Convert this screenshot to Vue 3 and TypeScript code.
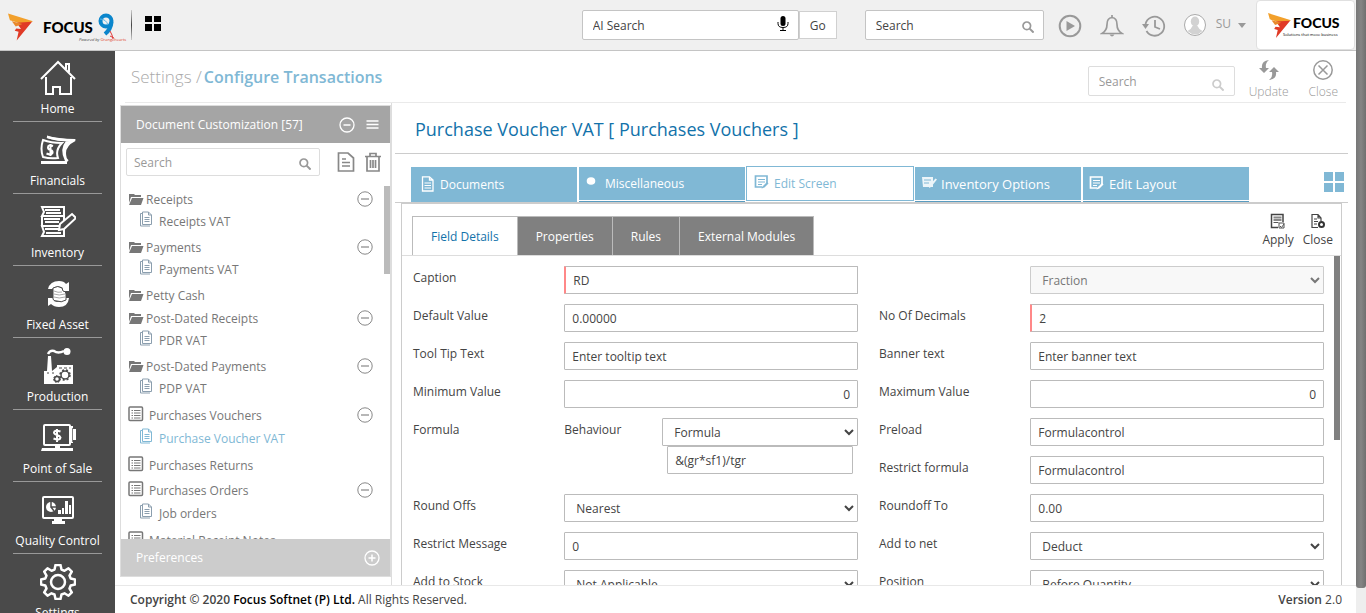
<script setup lang="ts">
import { ref } from 'vue'

interface NavItem { label: string; icon: string }
interface Group { label: string; kind: 'folder' | 'list'; children: string[] }
interface Tab { label: string; icon: string; look: string }
interface Field {
  label: string
  type: 'text' | 'select' | 'formula'
  value?: string
  placeholder?: string
  required?: boolean
  numeric?: boolean
  disabled?: boolean
}

const nav: NavItem[] = [
  { label: 'Home', icon: 'home' },
  { label: 'Financials', icon: 'money' },
  { label: 'Inventory', icon: 'inventory' },
  { label: 'Fixed Asset', icon: 'asset' },
  { label: 'Production', icon: 'factory' },
  { label: 'Point of Sale', icon: 'pos' },
  { label: 'Quality Control', icon: 'quality' },
  { label: 'Settings', icon: 'gear' },
]

const groups: Group[] = [
  { label: 'Receipts', kind: 'folder', children: ['Receipts VAT'] },
  { label: 'Payments', kind: 'folder', children: ['Payments VAT'] },
  { label: 'Petty Cash', kind: 'folder', children: [] },
  { label: 'Post-Dated Receipts', kind: 'folder', children: ['PDR VAT'] },
  { label: 'Post-Dated Payments', kind: 'folder', children: ['PDP VAT'] },
  { label: 'Purchases Vouchers', kind: 'list', children: ['Purchase Voucher VAT'] },
  { label: 'Purchases Returns', kind: 'list', children: [] },
  { label: 'Purchases Orders', kind: 'list', children: ['Job orders'] },
  { label: 'Material Receipt Notes', kind: 'list', children: [] },
]
const current = ref('Purchase Voucher VAT')

const tabs: Tab[] = [
  { label: 'Documents', icon: 'file', look: 'tall' },
  { label: 'Miscellaneous', icon: 'dot', look: 'lined' },
  { label: 'Edit Screen', icon: 'edit', look: 'active' },
  { label: 'Inventory Options', icon: 'options', look: 'lined large' },
  { label: 'Edit Layout', icon: 'edit', look: 'lined large' },
]
const subtabs = ['Field Details', 'Properties', 'Rules', 'External Modules']
const subtab = ref('Field Details')

const columns: Field[][] = [
  [
    { label: 'Caption', type: 'text', value: 'RD', required: true },
    { label: 'Default Value', type: 'text', value: '0.00000' },
    { label: 'Tool Tip Text', type: 'text', placeholder: 'Enter tooltip text' },
    { label: 'Minimum Value', type: 'text', value: '0', numeric: true },
    { label: 'Formula', type: 'formula', value: '&(gr*sf1)/tgr' },
    { label: 'Round Offs', type: 'select', value: 'Nearest' },
    { label: 'Restrict Message', type: 'text', value: '0' },
    { label: 'Add to Stock', type: 'select', value: 'Not Applicable' },
  ],
  [
    { label: '', type: 'select', value: 'Fraction', disabled: true },
    { label: 'No Of Decimals', type: 'text', value: '2', required: true },
    { label: 'Banner text', type: 'text', placeholder: 'Enter banner text' },
    { label: 'Maximum Value', type: 'text', value: '0', numeric: true },
    { label: 'Preload', type: 'text', value: 'Formulacontrol' },
    { label: 'Restrict formula', type: 'text', value: 'Formulacontrol' },
    { label: 'Roundoff To', type: 'text', value: '0.00' },
    { label: 'Add to net', type: 'select', value: 'Deduct' },
    { label: 'Position', type: 'select', value: 'Before Quantity' },
  ],
]
</script>

<template>
  <svg class="sprite" aria-hidden="true">
    <symbol id="home" viewBox="0 0 36 36">
      <path d="M1 19 18 2l17 17M6 17v17h7v-7h7v7h11V17M26 9V4h3v8" fill="none" stroke="#fff" stroke-width="2" />
    </symbol>
    <symbol id="money" viewBox="0 0 36 36">
      <path d="M7 5q8 3 28 3-10 5-10 13 0 6 3 8" fill="none" stroke="#fff" stroke-width="2" />
      <path d="M1 29h26v3H1zM7 3.500q10 3 29 4l-3 2Q18 10 7 6zM26 9l8-1q-9 4-9 13 0 5 3 8h-3q-6-12 1-20z" fill="#fff" />
      <path d="M3 8q8 3 19 3-7 7-4 15-8 1-15-1-3-8 0-17z" fill="none" stroke="#fff" stroke-width="2" />
      <path d="M13 14q-5-2-5 1.500 0 2 2.500 2.500t2 3Q11 23.500 6.500 21.500M10.500 12v12" fill="none" stroke="#fff" stroke-width="2" />
    </symbol>
    <symbol id="inventory" viewBox="0 0 36 36">
      <path d="M2 3h22v9H2l2-4zM24 12v10H2V12M2 22h22v10H2l2-4z" fill="none" stroke="#fff" stroke-width="2" />
      <path d="M5 6h15M6 9h15M4 15h16M5 18h14M5 25h15M6 29h15" stroke="#fff" stroke-width="2" />
      <path d="m19 26 1-6L32 10l4 4-12 11z" fill="#4a4a4a" stroke="#fff" stroke-width="2" />
    </symbol>
    <symbol id="asset" viewBox="0 0 36 36">
      <path d="M8 13Q10 5 19 5q5 0 7 3l3-2v9h-9l3-3q-6-4-11 1zM29 22q-1 9-10 9-5 0-8-3l-3 2v-8h9l-3 3q7 3 12-3z" fill="#fff" />
      <path d="M13 12q5-3 9 0l1 3q3 0 3 3v6q-5 3-9 1-4 0-4-2z" fill="#fff" stroke="#4a4a4a" />
      <path d="M14 15q4 2 8 1M14 18q5 2 11 0M14 21q5 2 11 0" stroke="#aaa" fill="none" />
    </symbol>
    <symbol id="factory" viewBox="0 0 36 36">
      <path d="M4 36V23h3L8 8h3l1 15 5-4v-2h16v19zM20 19h3M25 19h3" fill="#fff" />
      <path d="M8 6q2-4 6-3 4 3 10 0" fill="none" stroke="#fff" stroke-width="2.500" />
      <circle cx="27" cy="3.500" r="3.500" fill="#fff" />
      <path d="M19 20h3M24 20h3M29 20h2M7 25h2M12 25h2" stroke="#4a4a4a" />
      <circle cx="25" cy="27" r="4" fill="none" stroke="#4a4a4a" stroke-width="1.500" />
      <circle cx="25" cy="27" r="5" fill="none" stroke="#4a4a4a" stroke-width="1.500" stroke-dasharray="2 2" />
      <circle cx="17" cy="31" r="2.500" fill="none" stroke="#4a4a4a" stroke-width="1.500" />
      <circle cx="17" cy="31" r="3.500" fill="none" stroke="#4a4a4a" stroke-dasharray="1.500 1.500" />
    </symbol>
    <symbol id="pos" viewBox="0 0 36 36">
      <rect x="4" y="5" width="26" height="20" rx="1" fill="none" stroke="#fff" stroke-width="2" />
      <path d="M29 6h4v3h3v11h-3v3h-4zM15 25h5v3h-5zM2 28h31v3H1z" fill="#fff" />
      <path d="M32.500 8v14" stroke="#4a4a4a" stroke-width=".7" />
      <path d="M20.500 11.500q-6-2-6.500 1 0 1.500 3 2.500t3.500 2.500Q20 21 13.500 18.500M17 9v13" fill="none" stroke="#fff" stroke-width="2" />
    </symbol>
    <symbol id="quality" viewBox="0 0 36 36">
      <rect x="3" y="5" width="30" height="21" rx="1" fill="none" stroke="#fff" stroke-width="2" />
      <path d="M14 26h8v3h3v3H12v-3h2zM18 18h3v4h-3zM22 16h2v6h-2zM25 9h3v13h-3zM29 13h2v9h-2z" fill="#fff" />
      <circle cx="11" cy="15" r="5" fill="#fff" />
      <path d="M11 10v5h5M11 15l3 4" fill="none" stroke="#4a4a4a" stroke-width="1.500" />
    </symbol>
    <symbol id="gear" viewBox="0 0 36 36">
      <path d="M14.500 5.500 15.500 1h5l1 4.500 3 1.300 4-2.500 3.300 3.300-2.300 4 1.200 2.900 4.300 1v5l-4.300 1-1.200 3 2.300 3.900-3.300 3.300-4-2.400-3 1.200-1 4.500h-5l-1-4.500-3-1.200-4 2.400-3.300-3.300L6.500 24.500l-1.200-3-4.300-1v-5l4.300-1 1.200-2.900-2.300-4 3.300-3.300 4 2.500z" fill="none" stroke="#fff" stroke-width="2.500" stroke-linejoin="round" />
      <circle cx="18" cy="18" r="7" fill="none" stroke="#fff" stroke-width="2.500" />
    </symbol>
    <symbol id="search" viewBox="0 0 12 12">
      <circle cx="4.800" cy="4.800" r="3.800" fill="none" stroke="currentColor" stroke-width="1.700" />
      <path d="m7.600 7.600 4 4" stroke="currentColor" stroke-width="2" />
    </symbol>
    <symbol id="minus" viewBox="0 0 16 16">
      <circle cx="8" cy="8" r="7.200" fill="none" stroke="currentColor" />
      <path d="M4 8h8" stroke="currentColor" stroke-width="1.200" />
    </symbol>
    <symbol id="folder" viewBox="0 0 16 12">
      <path d="M1 1h5l1 1h6v2H3L1 10zM4 5h11.500L13 12H1z" fill="currentColor" />
    </symbol>
    <symbol id="list" viewBox="0 0 16 16">
      <rect x="1" y="1" width="13.500" height="13.500" rx="1" fill="none" stroke="#777" stroke-width="1.500" />
      <path d="M3.500 4.500h1.500M3.500 7h1.500M3.500 9.500h1.500M3.500 12h1.500M6 4.500h6.500M6 7h6.500M6 9.500h6.500M6 12h6.500" stroke="#777" />
    </symbol>
    <symbol id="pages" viewBox="0 0 14 16">
      <path d="M3.500 1h6l3 3v9.500h-9zM9.500 1v3h3M3 2.500H1.500V15H11" fill="none" stroke="currentColor" />
      <path d="M5.500 6.500h5M5.500 8.500h5M5.500 10.500h5" stroke="currentColor" />
    </symbol>
    <symbol id="file" viewBox="0 0 16 16">
      <path d="M2.500.800h7L13 4v11H2.500zM9.500.800V4H13" fill="none" stroke="currentColor" stroke-width="1.300" />
      <path d="M4.500 7h6.500M4.500 9.500h6.500M4.500 12h6.500" stroke="currentColor" />
    </symbol>
    <symbol id="dot" viewBox="0 0 16 16"><ellipse cx="6" cy="6" rx="4.300" ry="3.800" fill="currentColor" /></symbol>
    <symbol id="edit" viewBox="0 0 16 16">
      <path d="M13 9V2H1.500v11H8" fill="none" stroke="currentColor" stroke-width="1.700" />
      <path d="M4 5.500h7M4 8h7M4 10.500h4" stroke="currentColor" stroke-width="1.200" />
      <path d="m8 13 5-5 1.500 1.500-4 4-3 1z" fill="currentColor" />
    </symbol>
    <symbol id="options" viewBox="0 0 16 16">
      <path d="M1 2h11v10H2zM14.500 3.500l1.500 1L10 12l-2 1 .500-3z" fill="currentColor" opacity=".85" />
      <path d="M3 5h7M3 8h5" stroke="#80b8d5" />
    </symbol>
    <symbol id="mark" viewBox="0 0 26 28">
      <path d="M0 0 26 8 18 12 2 7z" fill="#f2a02b" />
      <path d="M9 9.500 25 8.500 9 28l2-9-4-1 1.500-2.500 5 .500z" fill="#e03a26" />
      <path d="M4 8 15 11 8 13.500z" fill="#e9892b" />
    </symbol>
  </svg>

  <div class="page">
    <div class="app">
      <header class="top">
        <a href="#" class="brand" aria-label="Focus 9">
          <svg class="brand-mark"><use href="#mark" /></svg>
          <span class="brand-word">FOCUS</span>
          <svg class="nine" viewBox="0 0 18 28">
            <circle cx="9" cy="8" r="5.500" fill="none" stroke="#0b86cc" stroke-width="4" />
            <path d="M14.500 9Q14 16 8 21" fill="none" stroke="#0b86cc" stroke-width="4" />
            <path d="M3 6q6 0 8 6" fill="none" stroke="#5bb6e6" />
            <path d="m13 18 2 4 1 4M13 23l4 2" stroke="#e03a3a" fill="none" />
          </svg>
          <span class="brand-sub"><i>Powered by</i> <b>Orangehearts</b></span>
        </a>
        <span class="bar"></span>
        <button class="tiles" aria-label="Modules"><i v-for="n in 4" :key="n"></i></button>
        <form class="ai" @submit.prevent>
          <label class="box">
            <input type="text" placeholder="AI Search" aria-label="AI Search" />
            <svg class="mic" viewBox="0 0 12 16">
              <rect x="3.500" y="0" width="5" height="10" rx="2.500" />
              <path d="M1 6v1.500q0 4 5 4t5-4V6M6 12v2M3 14.500h6" fill="none" stroke="#000" />
            </svg>
          </label>
          <button class="go">Go</button>
        </form>
        <label class="box global">
          <input type="text" placeholder="Search" aria-label="Search" />
          <svg class="glass"><use href="#search" /></svg>
        </label>
        <div class="tools">
          <button aria-label="Play"><svg viewBox="0 0 24 24"><circle cx="12" cy="12" r="10.300" fill="none" stroke="#999" stroke-width="2" /><path d="m8.500 7 8.500 5-8.500 5z" fill="#999" /></svg></button>
          <button aria-label="Notifications"><svg viewBox="0 0 24 24"><path d="M2 19.500q5-3 5-9Q7 4 12 3.500q5 .500 5 7 0 6 5 9zM12 1v2.500" fill="none" stroke="#999" stroke-width="1.700" /><path d="M9.500 20.500h5q-2.500 4-5 0z" fill="#999" /></svg></button>
          <button aria-label="History"><svg viewBox="0 0 24 24"><path d="M3.500 10a9.500 9.500 0 1 1 1 7M13 6v7l5 2" fill="none" stroke="#999" stroke-width="1.800" /><path d="M0 10h7l-3.500 5z" fill="#999" /></svg></button>
        </div>
        <button class="user">
          <svg viewBox="0 0 24 24"><circle cx="12" cy="12" r="10.500" fill="#fff" stroke="#aaa" /><ellipse cx="12" cy="8.500" rx="4.200" ry="5" fill="#d2d2d2" /><path d="M4.500 18q4-2 5-5h5q1 3 5 5-7 7-15 0z" fill="#d2d2d2" /></svg>
          <span>SU</span><i class="caret"></i>
        </button>
        <a href="#" class="card" aria-label="Focus">
          <svg><use href="#mark" /></svg>
          <span class="card-text"><b>FOCUS</b><small>Solutions that move business</small></span>
        </a>
      </header>

      <div class="body">
        <nav class="side">
          <a v-for="n in nav" :key="n.label" href="#"><svg><use :href="'#' + n.icon" /></svg><span>{{ n.label }}</span></a>
        </nav>

        <div class="main">
          <div class="crumbs">
            <h1><a href="#">Settings</a> /<strong>Configure Transactions</strong></h1>
            <label class="box page-search">
              <input type="text" placeholder="Search" aria-label="Search page" />
              <svg class="glass"><use href="#search" /></svg>
            </label>
            <button class="act">
              <svg viewBox="0 0 20 20"><path d="M10 0Q6 3 7 8h3l-5 5L0 8h3Q2 1 10 0zM10 20q4-3 3-8h-3l5-5 5 5h-3q1 7-7 8z" fill="#999" /></svg>Update
            </button>
            <button class="act">
              <svg viewBox="0 0 20 20"><circle cx="10" cy="10" r="9.200" fill="none" stroke="#999" stroke-width="1.500" /><path d="m5.500 5.500 9 9M14.500 5.500l-9 9" stroke="#999" stroke-width="1.500" /></svg>Close
            </button>
          </div>

          <div class="work">
            <aside class="docs-wrap">
              <div class="docs">
                <div class="docs-head">
                  <span>Document Customization [57]</span>
                  <button aria-label="Collapse"><svg class="ic16" viewBox="0 0 16 16"><circle cx="8" cy="8" r="7" fill="none" stroke="#fff" stroke-width="1.300" /><path d="M4.500 8h7" stroke="#fff" stroke-width="1.500" /></svg></button>
                  <button aria-label="Menu"><svg class="burger" viewBox="0 0 12 9"><path d="M0 1h12M0 4.500h12M0 8h12" stroke="#fff" stroke-width="1.600" /></svg></button>
                </div>
                <div class="docs-tools">
                  <label class="box">
                    <input type="text" placeholder="Search" aria-label="Search documents" />
                    <svg class="glass"><use href="#search" /></svg>
                  </label>
                  <button aria-label="New document"><svg viewBox="0 0 18 20"><path d="M2 1h9l5.500 5v13H1.500V1zM5 7h4M5 10.500h8M5 14h8" fill="none" stroke="#888" stroke-width="1.700" /></svg></button>
                  <button aria-label="Delete"><svg viewBox="0 0 18 20"><path d="M1 4.500h16M6 4V1.500h6V4M3 5v14h12V5M6.500 8v8M9 8v8M11.500 8v8" fill="none" stroke="#888" stroke-width="1.700" /></svg></button>
                </div>
                <div class="tree">
                  <template v-for="g in groups" :key="g.label">
                    <div class="group" :class="g.kind">
                      <svg><use :href="'#' + g.kind" /></svg><span>{{ g.label }}</span>
                      <button v-if="g.children.length" :aria-label="'Collapse ' + g.label"><svg class="ic16"><use href="#minus" /></svg></button>
                    </div>
                    <a v-for="c in g.children" :key="c" href="#" class="leaf" :class="{ on: c === current }" @click.prevent="current = c">
                      <svg><use href="#pages" /></svg><span>{{ c }}</span>
                    </a>
                  </template>
                  <i class="thumb"></i>
                </div>
                <div class="prefs">
                  <span>Preferences</span>
                  <button aria-label="Expand preferences"><svg class="ic16" viewBox="0 0 16 16"><circle cx="8" cy="8" r="7" fill="none" stroke="#fff" stroke-width="1.300" /><path d="M4.500 8h7M8 4.500v7" stroke="#fff" stroke-width="1.500" /></svg></button>
                </div>
              </div>
            </aside>

            <section class="voucher">
              <h2>Purchase Voucher VAT [ Purchases Vouchers ]</h2>
              <div class="tabs">
                <button v-for="t in tabs" :key="t.label" :class="t.look"><svg><use :href="'#' + t.icon" /></svg>{{ t.label }}</button>
                <button class="quad" aria-label="All tabs"><i v-for="n in 4" :key="n"></i></button>
              </div>
              <div class="panel">
                <div class="panel-head">
                  <div class="subtabs">
                    <button v-for="s in subtabs" :key="s" :class="{ on: s === subtab }" @click="subtab = s">{{ s }}</button>
                  </div>
                  <button class="mini">
                    <svg viewBox="0 0 16 16"><path d="M13 9V1.500H1.500v13H8" fill="none" stroke="#444" stroke-width="1.500" /><path d="M3.500 4.500h8M3.500 7h8" stroke="#888" stroke-width="2" /><path d="M3.500 9.500h5M9 10h5v5H9zM10 13l1.500 1.500L14 11" stroke="#555" fill="none" /></svg>Apply
                  </button>
                  <button class="mini">
                    <svg viewBox="0 0 16 16"><path d="M8 14.500H2V1.500h6L11 5v3M8 1.500V5h3M4 6h3M4 8.500h4M4 11h3" fill="none" stroke="#444" stroke-width="1.200" /><circle cx="11.500" cy="11.500" r="2.500" fill="none" stroke="#333" stroke-width="2" /></svg>Close
                  </button>
                </div>
                <form class="form" @submit.prevent>
                  <div v-for="(col, ci) in columns" :key="ci" class="col">
                    <div v-for="(f, fi) in col" :key="fi" class="row" :class="f.type">
                      <label :for="`f${ci}-${fi}`">{{ f.label }}</label>
                      <template v-if="f.type === 'formula'">
                        <label class="behaviour" for="behaviour">Behaviour</label>
                        <div class="stack">
                          <select id="behaviour"><option>Formula</option></select>
                          <input :id="`f${ci}-${fi}`" type="text" :value="f.value" />
                        </div>
                      </template>
                      <select v-else-if="f.type === 'select'" :id="`f${ci}-${fi}`" :disabled="f.disabled" :aria-label="f.label || 'Data type'"><option>{{ f.value }}</option></select>
                      <input v-else :id="`f${ci}-${fi}`" type="text" :value="f.value" :placeholder="f.placeholder" :class="{ required: f.required, numeric: f.numeric }" />
                    </div>
                  </div>
                  <i class="thumb"></i>
                </form>
              </div>
            </section>
          </div>

          <footer class="foot">
            <span><b>Copyright © 2020 <em>Focus Softnet (P) Ltd.</em></b> All Rights Reserved.</span>
            <span><b>Version</b> 2.0</span>
          </footer>
        </div>
      </div>
    </div>
    <div class="rail"><i></i></div>
  </div>
</template>

<style>
html, body { margin: 0; height: 100%; overflow: hidden; }
</style>

<style scoped>
* { box-sizing: border-box; }
.sprite { position: absolute; width: 0; height: 0; }
.page { display: grid; grid-template-columns: minmax(0, 1fr) 10px; height: 100vh; font: 12px/18px "Open Sans", sans-serif; color: #444; background: #fff; }
button { border: 0; padding: 0; margin: 0; background: none; font: inherit; color: inherit; cursor: pointer; }
a { color: inherit; text-decoration: none; }
input, select { font: inherit; color: #444; border: 1px solid #bbb; border-radius: 1px; background: #fff; outline: 0; min-width: 0; }
input::placeholder { color: #444; opacity: 1; }
svg { display: block; flex: none; }
.app { display: flex; flex-direction: column; min-width: 0; min-height: 0; }

.top { height: 50px; flex: none; display: flex; align-items: center; background: #f0f0f0; box-shadow: 0 1px 0 #c4c4c4; position: relative; z-index: 1; }
.brand { position: relative; display: flex; align-items: center; width: 123px; height: 50px; padding: 4px 0 0 8px; flex: none; }
.brand-mark { width: 25px; height: 28px; }
.brand-word { width: 54px; margin-left: 10px; font: 900 15px/28px "Liberation Sans Narrow", "Lato", sans-serif; color: #000; }
.nine { width: 18px; height: 28px; }
.brand-sub { position: absolute; left: 79px; top: 37px; font-size: 4px; line-height: 6px; white-space: nowrap; }
.brand-sub b { color: #e03a26; font-weight: 400; }
.bar { width: 1px; height: 30px; margin: 0 13px 0 8px; background: linear-gradient(#ccc, #444, #ccc); }
.tiles, .quad { display: grid; grid-template-columns: 1fr 1fr; gap: 2px; }
.tiles { width: 16px; height: 15px; margin-bottom: 4px; }
.tiles i { background: #000; }
.box { display: flex; align-items: center; background: #fff; border: 1px solid #c4c4c4; border-radius: 2px; }
.box input { flex: 1; border: 0; background: none; padding: 2px 0 0 10px; }
.glass { width: 12px; height: 12px; color: #999; margin-top: 3px; }
.ai { display: flex; align-items: center; margin-left: auto; }
.ai .box { width: 217px; height: 30px; }
.mic { width: 12px; height: 16px; margin: 0 9px 2px 0; }
.go { width: 38px; height: 28px; padding-top: 2px; background: #fff; border: 1px solid #d0d0d0; }
.global { width: 179px; height: 30px; margin-left: 28px; padding-right: 9px; }
.tools { display: flex; gap: 18px; margin: 2px 0 0 14px; }
.tools svg, .user svg { width: 24px; height: 24px; }
.user { display: flex; align-items: center; margin-left: 17px; color: #999; }
.user span { margin: 0 7px 2px 9px; }
.caret { border: 4px solid transparent; border-top: 5px solid #999; border-bottom: 0; }
.card { width: 99px; height: 50px; margin: 0 1px 0 10px; padding: 1px 0 0 11px; display: flex; align-items: center; background: #fff; border: 1px solid #e0e0e0; border-radius: 4px; flex: none; }
.card svg { width: 23px; height: 25px; }
.card-text { display: flex; flex-direction: column; margin-left: 2px; color: #000; }
.card b { font: 900 14px/18px "Liberation Sans Narrow", "Lato", sans-serif; }
.card small { font-size: 4px; line-height: 5px; white-space: nowrap; margin-left: -10px; }

.body { flex: 1; display: flex; min-height: 0; }
.side { width: 115px; flex: none; background: #4a4a4a; overflow: hidden; }
.side a { height: 72px; margin: 0 13px; border-bottom: 1px solid #999; display: flex; flex-direction: column; align-items: center; justify-content: flex-end; padding-bottom: 3px; gap: 4px; color: #fff; white-space: nowrap; }
.side a svg { width: 36px; height: 36px; }

.main { flex: 1; min-width: 0; display: flex; flex-direction: column; }
.crumbs { height: 53px; flex: none; margin: 0 10px; padding: 1px 8px 0 6px; display: flex; align-items: center; border-bottom: 1px solid #eaeaea; }
h1 { margin: 0 auto 0 0; font-size: 17px; line-height: 24px; font-weight: 300; color: #aaa; }
h1 strong { margin-left: 2px; font-weight: 600; font-size: 16px; color: #80b8d5; }
.page-search { width: 147px; height: 30px; margin-top: 8px; padding-right: 10px; border-color: #ddd; }
.page-search input::placeholder, .docs-tools input::placeholder { color: #999; }
.page-search .glass { color: #ccc; margin-top: 8px; }
.act { display: flex; flex-direction: column; align-items: center; gap: 3px; color: #999; margin: 7px 0 0 14px; font-weight: 300; }
.act + .act { margin-left: 20px; }
.act svg { width: 20px; height: 20px; }

.work { flex: 1; display: flex; min-height: 0; }
.docs-wrap { width: 277px; flex: none; padding: 2px 0 8px 5px; border-right: 1px solid #ddd; }
.docs { height: 100%; display: flex; flex-direction: column; border: 1px solid #ddd; }
.docs-head { height: 37px; flex: none; display: flex; align-items: center; gap: 11px; padding: 0 11px 0 15px; background: #a5a5a5; color: #fff; }
.docs-head span, .prefs span { flex: 1; }
.ic16 { width: 16px; height: 16px; }
.burger { width: 13px; height: 9px; }
.docs-tools { display: flex; align-items: center; gap: 9px; padding: 5px 8px 0 5px; }
.docs-tools .box { flex: 1; height: 28px; margin-right: 8px; padding-right: 8px; border-color: #ddd; }
.docs-tools .box input { padding-left: 7px; }
.docs-tools button svg { width: 18px; height: 20px; }
.tree { position: relative; flex: 1; min-height: 0; overflow: hidden; margin-top: 10px; padding-top: 2px; color: #777; }
.group { display: flex; align-items: center; height: 23px; padding: 0 17px 0 7px; }
.group > svg { width: 16px; height: 12px; color: #777; margin: 0 2px 2px 0; }
.group span { flex: 1; padding-top: 1px; }
.group button { color: #888; padding-bottom: 2px; }
.group.list { height: 25px; }
.group.list > svg { height: 16px; margin: 0 5px 3px 0; }
.leaf { display: flex; height: 25px; padding-left: 18px; line-height: 22px; }
.leaf svg { width: 14px; height: 16px; margin-right: 6px; color: #8b9eae; }
.leaf.on { color: #80b8d5; }
.leaf.on svg { color: #80b8d5; }
.tree .thumb { position: absolute; right: 0; top: 0; width: 6px; height: 25%; background: #bbb; }
.prefs { height: 37px; flex: none; display: flex; align-items: center; padding: 0 10px 0 15px; background: #ccc; color: #fff; }

.voucher { flex: 1; min-width: 0; display: flex; flex-direction: column; padding: 0 8px 0 3px; }
h2 { margin: 0 0 12px; padding: 14px 0 12px 20px; border-bottom: 1px solid #ccc; font-size: 18px; line-height: 24px; font-weight: 400; color: #1272aa; }
.tabs { display: flex; align-items: flex-end; gap: 2px; height: 37px; flex: none; padding-left: 16px; border-bottom: 1px solid #ccc; }
.tabs > button { flex: 0 1 166px; height: 35px; display: flex; align-items: center; padding: 1px 9px 0; background: #80b8d5; color: #fff; text-align: left; white-space: nowrap; }
.tabs > button svg { width: 16px; height: 16px; margin: 0 4px 3px 0; }
.tabs > .lined { border-bottom: 1px solid #5a9cc0; box-shadow: inset 0 -1px #fff; padding: 0 6px; }
.tabs > .large { font-size: 13px; }
.tabs > .active { flex-basis: 168px; margin: 0 -1px; padding: 0 7px; background: #fff; border: 1px solid #80b8d5; color: #80b8d5; align-self: flex-start; }
.tabs > .quad { flex: none; display: grid; width: 20px; height: 20px; margin: 0 4px 10px auto; padding: 0; background: none; }
.quad i { width: 9px; height: 9px; background: #80b8d5; }
.panel { flex: 1; min-height: 0; display: flex; flex-direction: column; margin: 0 6px; border: 1px solid #ccc; border-width: 1px 1px 0; }
.panel-head { display: flex; align-items: flex-end; height: 52px; flex: none; padding: 0 8px 0 10px; border-bottom: 1px solid #ddd; }
.subtabs { display: flex; flex: 1; }
.subtabs button { height: 39px; padding: 2px 18px 0; background: #808080; color: #fff; border: 1px solid #bbb; border-width: 1px 1px 0 0; }
.subtabs button.on { background: #fff; color: #1272aa; border-left-width: 1px; }
.mini { display: flex; flex-direction: column; align-items: center; gap: 2px; margin: 0 0 6px 9px; }
.mini svg { width: 16px; height: 16px; }
.form { position: relative; flex: 1; min-height: 0; overflow: hidden; display: grid; grid-template-columns: 1fr 1fr; gap: 21px; padding: 10px 17px 0 11px; }
.col { display: flex; flex-direction: column; gap: 10px; min-width: 0; }
.row { display: flex; flex: none; align-items: flex-start; height: 28px; }
.row > label:first-child { flex: 0 0 34%; }
.row label { line-height: 24px; }
.row input, .row select { flex: 1; height: 28px; padding: 1px 7px 0; }
.row select { padding: 1px 3px 0 7px; }
.row select:disabled { background: #f8f8f8; color: #777; border-color: #ccc; opacity: 1; }
.row .required { border-left: 2px solid #f88; }
.row .numeric { text-align: right; }
.row.formula { height: 66px; }
.behaviour { width: 98px; flex: none; }
.stack { flex: 1; display: flex; flex-direction: column; min-width: 0; }
.stack input, .stack select { flex: none; }
.stack input { margin: 0 5px; }
.form .thumb { position: absolute; right: 1px; top: 0; width: 6px; height: 56%; background: #808080; }

.foot { height: 28px; flex: none; display: flex; justify-content: space-between; align-items: center; padding: 0 14px 0 15px; border-top: 1px solid #e8e8e8; }
.foot b { font-weight: 600; }
.foot em { font-style: normal; color: #000; }
.rail { background: #eee; display: flex; flex-direction: column; }
.rail i { height: 96%; background: linear-gradient(90deg, #777, #858585 50%, #707070); border-radius: 0 0 3px 3px; }
</style>
